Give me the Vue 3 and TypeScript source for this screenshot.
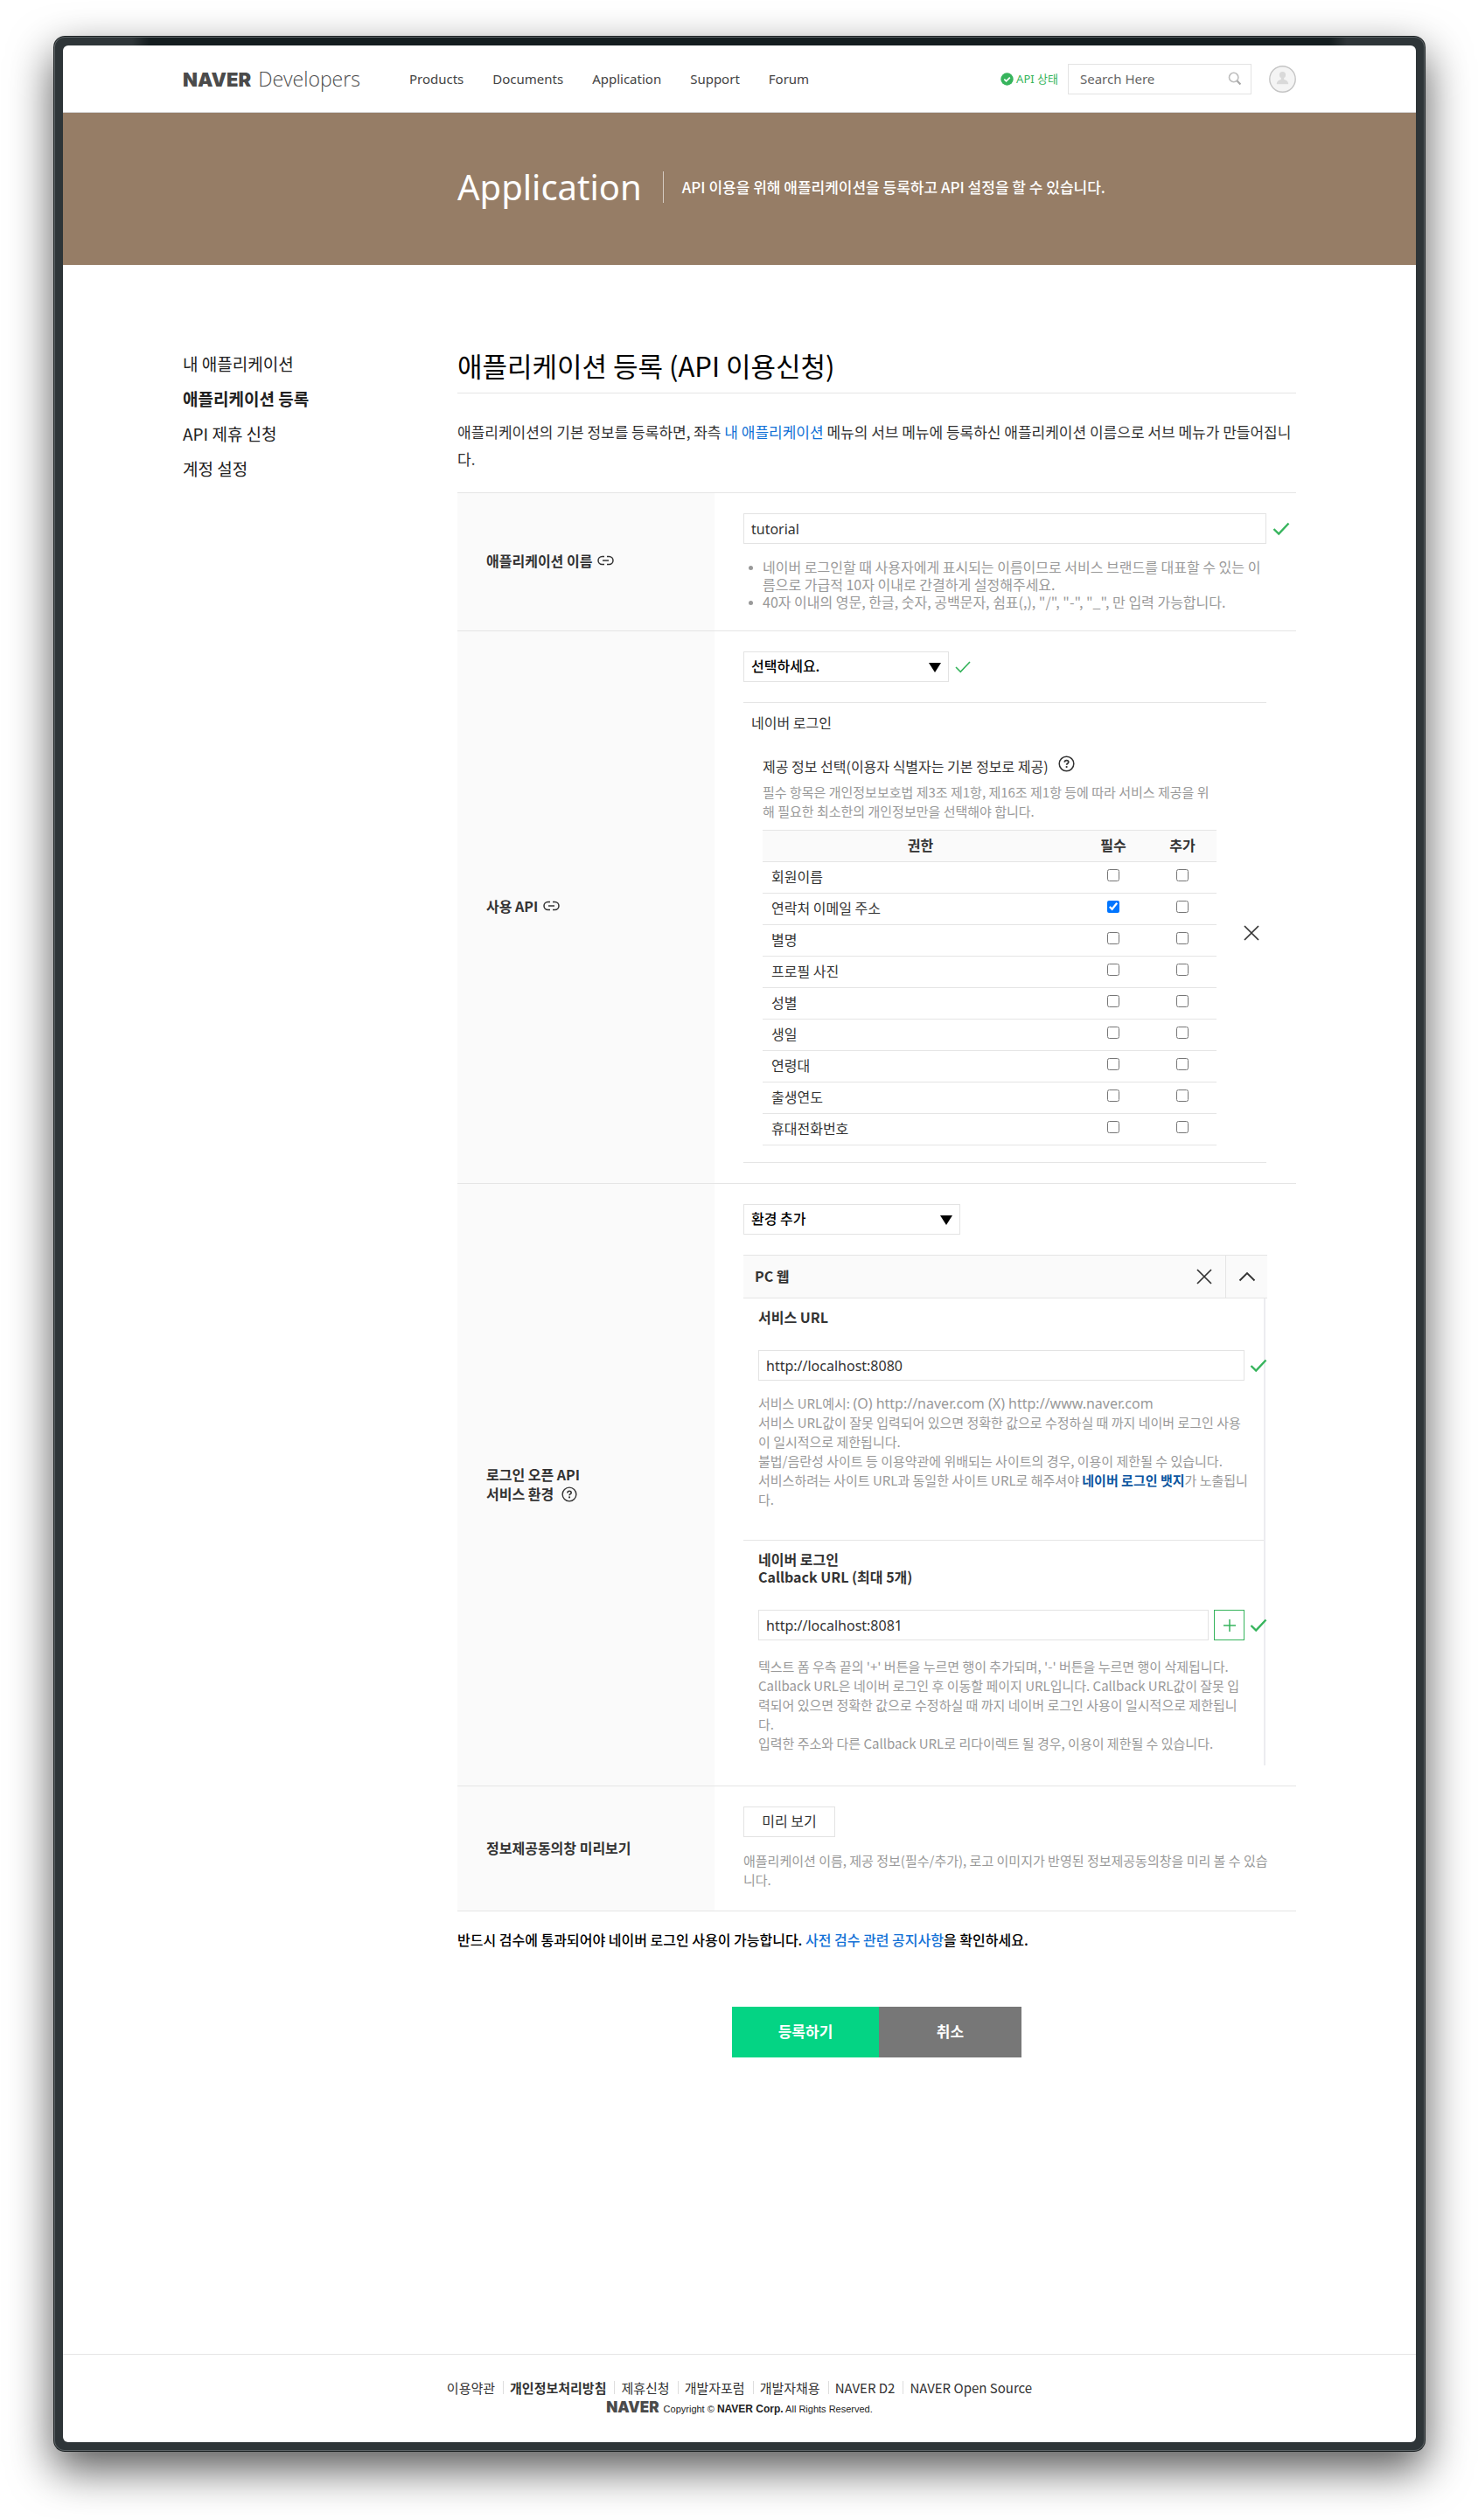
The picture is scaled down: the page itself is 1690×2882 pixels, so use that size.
<script setup lang="ts">
import { ref } from 'vue'

interface NavLink {
  label: string
  strong?: boolean
}

interface Permission {
  id: string
  label: string
  required: boolean
  optional: boolean
}

const navLinks: NavLink[] = [
  { label: 'Products' },
  { label: 'Documents' },
  { label: 'Application' },
  { label: 'Support' },
  { label: 'Forum' },
]

const sideLinks: NavLink[] = [
  { label: '내 애플리케이션' },
  { label: '애플리케이션 등록', strong: true },
  { label: 'API 제휴 신청' },
  { label: '계정 설정' },
]

const footerLinks: NavLink[] = [
  { label: '이용약관' },
  { label: '개인정보처리방침', strong: true },
  { label: '제휴신청' },
  { label: '개발자포럼' },
  { label: '개발자채용' },
  { label: 'NAVER D2' },
  { label: 'NAVER Open Source' },
]

const permissions = ref<Permission[]>([
  { id: 'name', label: '회원이름', required: false, optional: false },
  { id: 'email', label: '연락처 이메일 주소', required: true, optional: false },
  { id: 'nickname', label: '별명', required: false, optional: false },
  { id: 'photo', label: '프로필 사진', required: false, optional: false },
  { id: 'gender', label: '성별', required: false, optional: false },
  { id: 'birthday', label: '생일', required: false, optional: false },
  { id: 'age', label: '연령대', required: false, optional: false },
  { id: 'birthyear', label: '출생연도', required: false, optional: false },
  { id: 'mobile', label: '휴대전화번호', required: false, optional: false },
])

const appName = ref('tutorial')
const serviceUrl = ref('http://localhost:8080')
const callbackUrl = ref('http://localhost:8081')
</script>

<template>
  <div class="desk">
    <div class="bezel">
      <div class="screen">
        <header class="topbar">
          <div class="wrap topbar-inner">
            <a class="logo" href="#"><span class="logo-naver">NAVER</span><span class="logo-dev">Developers</span></a>
            <nav class="nav">
              <a v-for="link in navLinks" :key="link.label" href="#">{{ link.label }}</a>
            </nav>
            <a class="status" href="#">
              <svg width="15" height="15" viewBox="0 0 15 15" aria-hidden="true">
                <circle cx="7.5" cy="7.5" r="7.2" fill="#36b45c" />
                <path d="M4.3 7.6l2.3 2.3 4.2-4.3" fill="none" stroke="#fff" stroke-width="1.7" />
              </svg>
              API 상태
            </a>
            <form class="search" @submit.prevent>
              <input type="text" placeholder="Search Here" aria-label="Search Here" />
              <button type="submit" aria-label="검색">
                <svg width="16" height="16" viewBox="0 0 16 16" aria-hidden="true">
                  <circle cx="6.7" cy="6.5" r="5.2" fill="none" stroke="#bdbdbd" stroke-width="1.6" />
                  <path d="M10.6 10.4l3.8 4" stroke="#a8a8a8" stroke-width="2.2" />
                </svg>
              </button>
            </form>
            <a class="avatar" href="#" aria-label="내 정보">
              <svg width="31" height="31" viewBox="0 0 31 31" aria-hidden="true">
                <circle cx="15.5" cy="15.5" r="14.7" fill="#f4f4f4" stroke="#c4c4c4" stroke-width="1.4" />
                <circle cx="15.5" cy="10.7" r="3.6" fill="#d9d9d9" />
                <path d="M8.8 21.2c0-3.6 2.6-4.8 5-5.3v-2h3.4v2c2.4.5 5 1.7 5 5.3z" fill="#d9d9d9" />
              </svg>
            </a>
          </div>
        </header>

        <div class="banner">
          <div class="wrap banner-inner">
            <span class="banner-title">Application</span>
            <span class="banner-text">API 이용을 위해 애플리케이션을 등록하고 API 설정을 할 수 있습니다.</span>
          </div>
        </div>

        <div class="wrap body">
          <aside class="side">
            <a v-for="link in sideLinks" :key="link.label" href="#" :class="{ strong: link.strong }">{{ link.label }}</a>
          </aside>

          <main class="main">
            <h1>애플리케이션 등록 (API 이용신청)</h1>
            <p class="intro">
              애플리케이션의 기본 정보를 등록하면, 좌측 <a href="#">내 애플리케이션</a> 메뉴의 서브 메뉴에 등록하신 애플리케이션 이름으로 서브 메뉴가 만들어집니다.
            </p>

            <div class="form">
              <section class="row">
                <div class="row-head">
                  <label for="app-name">애플리케이션 이름</label>
                  <svg class="link-icon" width="19" height="12" viewBox="0 0 19 12" aria-hidden="true">
                    <path d="M8 1.5H5.5a4.5 4.5 0 0 0 0 9H8M11 1.5h2.5a4.5 4.5 0 0 1 0 9H11M6 6h7" fill="none" stroke="#333" stroke-width="1.5" />
                  </svg>
                </div>
                <div class="row-field">
                  <div class="line">
                    <input id="app-name" v-model="appName" class="box" type="text" />
                    <svg class="check" width="20" height="16" viewBox="0 0 20 16" aria-hidden="true">
                      <path d="M1.5 8l5.7 5.5L18.5 1.5" fill="none" stroke="#36b45c" stroke-width="2.4" />
                    </svg>
                  </div>
                  <ul class="hints">
                    <li>네이버 로그인할 때 사용자에게 표시되는 이름이므로 서비스 브랜드를 대표할 수 있는 이<br />름으로 가급적 10자 이내로 간결하게 설정해주세요.</li>
                    <li>40자 이내의 영문, 한글, 숫자, 공백문자, 쉼표(,), "/", "-", "_", 만 입력 가능합니다.</li>
                  </ul>
                </div>
              </section>

              <section class="row">
                <div class="row-head">
                  <label for="api-select">사용 API</label>
                  <svg class="link-icon" width="19" height="12" viewBox="0 0 19 12" aria-hidden="true">
                    <path d="M8 1.5H5.5a4.5 4.5 0 0 0 0 9H8M11 1.5h2.5a4.5 4.5 0 0 1 0 9H11M6 6h7" fill="none" stroke="#333" stroke-width="1.5" />
                  </svg>
                </div>
                <div class="row-field">
                  <div class="line">
                    <span class="select select-api">
                      <select id="api-select"><option>선택하세요.</option></select>
                      <svg width="14" height="11" viewBox="0 0 14 11" aria-hidden="true"><path d="M0 0h14L7 11z" /></svg>
                    </span>
                    <svg class="check" width="18" height="14" viewBox="0 0 18 14" aria-hidden="true">
                      <path d="M1 7l5.3 5.3L17 1" fill="none" stroke="#36b45c" stroke-width="1.6" />
                    </svg>
                  </div>
                  <div class="api">
                    <div class="api-body">
                      <p class="api-name">네이버 로그인</p>
                      <div class="scope">
                        <p class="scope-title">
                          제공 정보 선택(이용자 식별자는 기본 정보로 제공)
                          <svg width="19" height="19" viewBox="0 0 19 19" aria-hidden="true">
                            <circle cx="9.5" cy="9.5" r="8.3" fill="none" stroke="#333" stroke-width="1.5" />
                            <path d="M7.3 7.8c0-3.1 4.5-2.9 4.5-.2 0 1.6-2.2 1.6-2.2 3.2" fill="none" stroke="#333" stroke-width="1.7" />
                            <circle cx="9.6" cy="13.1" r="1.1" fill="#333" />
                          </svg>
                        </p>
                        <p class="note">필수 항목은 개인정보보호법 제3조 제1항, 제16조 제1항 등에 따라 서비스 제공을 위<br />해 필요한 최소한의 개인정보만을 선택해야 합니다.</p>
                        <table>
                          <thead>
                            <tr><th scope="col">권한</th><th scope="col" class="col-req">필수</th><th scope="col" class="col-opt">추가</th></tr>
                          </thead>
                          <tbody>
                            <tr v-for="p in permissions" :key="p.id">
                              <td>{{ p.label }}</td>
                              <td class="tick"><input v-model="p.required" type="checkbox" :aria-label="p.label + ' 필수'" /></td>
                              <td class="tick"><input v-model="p.optional" type="checkbox" :aria-label="p.label + ' 추가'" /></td>
                            </tr>
                          </tbody>
                        </table>
                      </div>
                    </div>
                    <button class="icon-btn remove" type="button" aria-label="네이버 로그인 삭제">
                      <svg width="18" height="18" viewBox="0 0 18 18"><path d="M1 1l16 16M17 1L1 17" stroke="#333" stroke-width="1.7" /></svg>
                    </button>
                  </div>
                </div>
              </section>

              <section class="row">
                <div class="row-head">
                  <label for="env-select">
                    로그인 오픈 API<br />서비스 환경
                    <svg class="help-inline" width="18" height="18" viewBox="0 0 19 19" aria-hidden="true">
                      <circle cx="9.5" cy="9.5" r="8.3" fill="none" stroke="#333" stroke-width="1.5" />
                      <path d="M7.3 7.8c0-3.1 4.5-2.9 4.5-.2 0 1.6-2.2 1.6-2.2 3.2" fill="none" stroke="#333" stroke-width="1.7" />
                      <circle cx="9.6" cy="13.1" r="1.1" fill="#333" />
                    </svg>
                  </label>
                </div>
                <div class="row-field">
                  <div class="line">
                    <span class="select select-env">
                      <select id="env-select"><option>환경 추가</option></select>
                      <svg width="14" height="11" viewBox="0 0 14 11" aria-hidden="true"><path d="M0 0h14L7 11z" /></svg>
                    </span>
                  </div>
                  <div class="panel">
                    <div class="panel-head">
                      <strong>PC 웹</strong>
                      <button class="icon-btn" type="button" aria-label="PC 웹 삭제">
                        <svg width="18" height="18" viewBox="0 0 18 18"><path d="M1 1l16 16M17 1L1 17" stroke="#333" stroke-width="1.7" /></svg>
                      </button>
                      <button class="icon-btn fold" type="button" aria-label="접기">
                        <svg width="20" height="12" viewBox="0 0 20 12"><path d="M1.5 10.5L10 2l8.5 8.5" fill="none" stroke="#333" stroke-width="1.9" /></svg>
                      </button>
                    </div>
                    <div class="panel-body">
                      <div class="panel-part">
                        <label for="service-url">서비스 URL</label>
                        <div class="line">
                          <input id="service-url" v-model="serviceUrl" class="box" type="text" />
                          <svg class="check" width="20" height="16" viewBox="0 0 20 16" aria-hidden="true">
                            <path d="M1.5 8l5.7 5.5L18.5 1.5" fill="none" stroke="#36b45c" stroke-width="2.4" />
                          </svg>
                        </div>
                        <p class="note">
                          서비스 URL예시: <span class="latin">(O) http://naver.com (X) http://www.naver.com</span><br />
                          서비스 URL값이 잘못 입력되어 있으면 정확한 값으로 수정하실 때 까지 네이버 로그인 사용<br />
                          이 일시적으로 제한됩니다.<br />
                          불법/음란성 사이트 등 이용약관에 위배되는 사이트의 경우, 이용이 제한될 수 있습니다.<br />
                          서비스하려는 사이트 URL과 동일한 사이트 URL로 해주셔야 <a href="#">네이버 로그인 뱃지</a>가 노출됩니<br />
                          다.
                        </p>
                      </div>
                      <div class="panel-part callback">
                        <label for="callback-url">네이버 로그인<br />Callback URL (최대 5개)</label>
                        <div class="line">
                          <input id="callback-url" v-model="callbackUrl" class="box" type="text" />
                          <button class="plus" type="button" aria-label="Callback URL 추가">
                            <svg width="14" height="14" viewBox="0 0 14 14"><path d="M7 0v14M0 7h14" stroke="#36b45c" stroke-width="1.5" /></svg>
                          </button>
                          <svg class="check" width="20" height="16" viewBox="0 0 20 16" aria-hidden="true">
                            <path d="M1.5 8l5.7 5.5L18.5 1.5" fill="none" stroke="#36b45c" stroke-width="2.4" />
                          </svg>
                        </div>
                        <p class="note">
                          텍스트 폼 우측 끝의 '+' 버튼을 누르면 행이 추가되며, '-' 버튼을 누르면 행이 삭제됩니다.<br />
                          Callback URL은 네이버 로그인 후 이동할 페이지 URL입니다. Callback URL값이 잘못 입<br />
                          력되어 있으면 정확한 값으로 수정하실 때 까지 네이버 로그인 사용이 일시적으로 제한됩니<br />
                          다.<br />
                          입력한 주소와 다른 Callback URL로 리다이렉트 될 경우, 이용이 제한될 수 있습니다.
                        </p>
                      </div>
                    </div>
                  </div>
                </div>
              </section>

              <section class="row">
                <div class="row-head"><span>정보제공동의창 미리보기</span></div>
                <div class="row-field">
                  <button class="preview" type="button">미리 보기</button>
                  <p class="note preview-note">애플리케이션 이름, 제공 정보(필수/추가), 로고 이미지가 반영된 정보제공동의창을 미리 볼 수 있습<br />니다.</p>
                </div>
              </section>
            </div>

            <p class="notice">반드시 검수에 통과되어야 네이버 로그인 사용이 가능합니다. <a href="#">사전 검수 관련 공지사항</a>을 확인하세요.</p>

            <div class="actions">
              <button class="submit" type="submit">등록하기</button>
              <button class="cancel" type="button">취소</button>
            </div>
          </main>
        </div>

        <footer class="foot">
          <nav class="foot-links">
            <a v-for="link in footerLinks" :key="link.label" href="#" :class="{ strong: link.strong }">{{ link.label }}</a>
          </nav>
          <p class="copyright"><span class="foot-logo">NAVER</span><span>Copyright © <b>NAVER Corp.</b> All Rights Reserved.</span></p>
        </footer>
      </div>
    </div>
  </div>
</template>

<style>
body {
  background: #fff;
}
</style>

<style scoped>
* {
  box-sizing: border-box;
}

p,
h1,
ul {
  margin: 0;
  padding: 0;
}

a {
  color: inherit;
  text-decoration: none;
}

button,
input,
select {
  margin: 0;
  padding: 0;
  border-radius: 0;
  color: inherit;
  font: inherit;
}

button {
  background: none;
  border: 0;
}

svg {
  display: block;
  flex: none;
}

.desk {
  padding: 41px 60px 79px 61px;
  color: #333;
  font-family: 'Noto Sans CJK KR', 'Noto Sans', sans-serif;
  font-size: 16px;
  line-height: 22px;
}

.bezel {
  padding: 11px;
  border-radius: 13px;
  background: linear-gradient(90deg, #2e3538 90px, #141d1f 110px, #141d1f calc(100% - 110px), #2e3538 calc(100% - 90px)) top / 100% 40px no-repeat, #2e3538;
  box-shadow: inset 0 0 0 1px #1b2022, inset 0 0 0 2px #5b6265, 0 20px 50px rgba(0, 0, 0, 0.66);
}

.screen {
  overflow: hidden;
  border-radius: 6px;
  background: #fff;
}

.wrap {
  width: 100%;
  max-width: 1273px;
  margin: 0 auto;
}

.topbar {
  border-bottom: 1px solid #d8d8d8;
}

.topbar-inner {
  display: flex;
  align-items: center;
  height: 76px;
  font-family: 'Noto Sans', 'Noto Sans CJK KR', sans-serif;
}

.logo {
  display: flex;
  align-items: baseline;
  gap: 8px;
  color: #4b4b4b;
}

.logo-naver,
.foot-logo {
  font-family: Inter, sans-serif;
  font-size: 22px;
  font-weight: 900;
}

.logo-dev {
  font-family: 'Open Sans', sans-serif;
  font-size: 23px;
  font-weight: 300;
}

.nav {
  display: flex;
  flex: 1;
  gap: 33px;
  margin-left: 56px;
  color: #444;
  font-size: 15px;
}

.status {
  display: flex;
  align-items: center;
  gap: 3px;
  color: #36b45c;
  font-size: 13px;
}

.search {
  display: flex;
  align-items: center;
  width: 210px;
  height: 35px;
  margin: 0 20px 0 11px;
  padding: 0 10px 0 13px;
  border: 1px solid #e3e3e3;
}

.search input {
  flex: 1;
  min-width: 0;
  border: 0;
  outline: 0;
  background: none;
  font-size: 15px;
}

.search input::placeholder {
  color: #666;
  opacity: 1;
}

.banner {
  background: #967d66;
  color: #fff;
}

.banner-inner {
  display: flex;
  align-items: center;
  height: 174px;
  padding: 0 0 4px 314px;
}

.banner-title {
  padding-right: 24px;
  font-family: 'Noto Sans', sans-serif;
  font-size: 40px;
  line-height: 60px;
}

.banner-text {
  padding-left: 21px;
  border-left: 1px solid #d5cbc2;
  font-size: 17px;
  font-weight: 500;
  line-height: 36px;
}

.body {
  display: flex;
  padding: 93px 0 339px;
}

.side {
  flex: 0 0 314px;
  display: flex;
  flex-direction: column;
  color: #222;
  font-size: 19px;
  line-height: 40px;
}

.strong {
  font-weight: 700;
}

.main {
  flex: 1;
  min-width: 0;
  padding-top: 2px;
}

h1 {
  padding-bottom: 11px;
  border-bottom: 1px solid #e5e5e5;
  color: #000;
  font-size: 31px;
  font-weight: 400;
  line-height: 40px;
}

.intro {
  padding: 28px 0 23px;
  font-size: 17px;
  line-height: 31px;
  word-break: break-all;
}

.intro a,
.notice a {
  color: #1271d6;
}

.form {
  border-bottom: 1px solid #e5e5e5;
}

.row {
  display: flex;
  border-top: 1px solid #e5e5e5;
}

.row-head {
  flex: 0 0 294px;
  display: flex;
  align-items: center;
  gap: 6px;
  padding: 0 0 3px 33px;
  background: #fafafa;
  font-weight: 700;
}

.help-inline {
  display: inline-block;
  margin-left: 5px;
  vertical-align: -3px;
}

.row-field {
  flex: 1;
  min-width: 0;
  padding: 23px 0 23px 33px;
}

.line {
  display: flex;
  align-items: center;
  gap: 7px;
  padding-right: 7px;
}

.box {
  flex: 1;
  min-width: 0;
  height: 35px;
  padding: 0 8px;
  border: 1px solid #e3e3e3;
  outline: 0;
  background: #fff;
  font-family: 'Noto Sans', 'Noto Sans CJK KR', sans-serif;
}

.hints {
  margin-top: 16px;
  padding-left: 22px;
  color: #999;
  line-height: 20px;
  list-style: none;
  white-space: nowrap;
}

.hints li::before {
  content: '';
  display: inline-block;
  width: 5px;
  height: 5px;
  margin: 0 11px 0 -16px;
  border-radius: 50%;
  background: #999;
  vertical-align: 3px;
}

.select {
  position: relative;
  display: block;
}

.select-api {
  width: 235px;
}

.select-env {
  width: 248px;
}

.select select {
  display: block;
  width: 100%;
  height: 35px;
  padding: 0 8px 3px;
  border: 1px solid #e3e3e3;
  appearance: none;
  background: #fff;
  color: #000;
  font-weight: 500;
}

.select svg {
  position: absolute;
  top: 13px;
  right: 9px;
  pointer-events: none;
}

.api {
  display: flex;
  align-items: center;
  margin: 23px 34px 0 0;
  border: 1px solid #e5e5e5;
  border-width: 1px 0;
}

.api-body {
  flex: 1;
  padding: 11px 23px 19px 9px;
}

.scope {
  padding: 28px 0 0 13px;
}

.scope-title {
  display: flex;
  align-items: flex-start;
  gap: 11px;
}

.scope-title svg {
  margin-top: -1px;
}

.note {
  color: #999;
  font-size: 15px;
  white-space: nowrap;
}

.latin {
  font-family: 'Noto Sans', sans-serif;
  font-size: 16px;
}

.scope .note {
  margin: 8px 0 10px;
}

.icon-btn {
  display: flex;
  flex: 0 0 48px;
  align-items: center;
  justify-content: center;
  height: 48px;
}

.remove {
  flex-basis: 34px;
}

table {
  width: 100%;
  border-collapse: collapse;
}

th,
td {
  height: 36px;
  padding: 0 10px 4px;
  border: 1px solid #e5e5e5;
  border-width: 1px 0;
  text-align: left;
}

th {
  background: #fafafa;
  font-weight: 700;
  text-align: center;
}

.col-req {
  width: 80px;
}

.col-opt {
  width: 78px;
}

.tick {
  text-align: center;
}

.tick input {
  display: block;
  width: 14px;
  height: 14px;
  margin: 0 auto 2px;
  accent-color: #0075ff;
}

.panel {
  margin: 23px 33px 0 0;
}

.panel-head {
  display: flex;
  align-items: center;
  padding-left: 13px;
  border: 1px solid #e5e5e5;
  border-width: 1px 0;
  background: #fafafa;
}

.panel-head strong {
  flex: 1;
  padding-bottom: 3px;
}

.panel-head .fold {
  border-left: 1px solid #e5e5e5;
}

.panel-body {
  margin-right: 2px;
  border-right: 2px solid #ececf0;
}

.panel-part {
  padding: 11px 0 35px 17px;
}

.panel-part + .panel-part {
  padding-bottom: 14px;
  border-top: 1px solid #e5e5e5;
}

.panel-part label {
  display: block;
  margin-bottom: 28px;
  font-weight: 700;
  line-height: 20px;
}

.panel-part .line {
  gap: 6px;
  margin-right: -4px;
  padding: 0;
}

.panel-part .note {
  margin-top: 15px;
}

.callback .note {
  margin-top: 19px;
}

.note a {
  color: #0b55a0;
  font-weight: 700;
}

.plus {
  display: flex;
  align-items: center;
  justify-content: center;
  width: 35px;
  height: 35px;
  border: 1px solid #36b45c;
}

.preview {
  display: block;
  width: 105px;
  height: 35px;
  padding-bottom: 3px;
  border: 1px solid #e3e3e3;
}

.row-field .preview-note {
  margin: 16px 0 1px;
}

.notice {
  margin-top: 21px;
  color: #000;
  font-weight: 500;
}

.actions {
  display: flex;
  justify-content: center;
  margin-top: 66px;
  color: #fff;
  font-size: 17px;
  font-weight: 700;
}

.actions button {
  height: 58px;
  padding-bottom: 3px;
}

.submit {
  width: 168px;
  background: #04d484;
}

.cancel {
  width: 163px;
  background: #777;
}

.foot {
  padding: 28px 0;
  border-top: 1px solid #e5e5e5;
}

.foot-links {
  display: flex;
  justify-content: center;
  padding: 2px 0 3px;
  font-size: 15px;
  line-height: 15px;
}

.foot-links a + a {
  margin-left: 9px;
  padding-left: 7px;
  border-left: 1px solid #ddd;
}

.copyright {
  display: flex;
  justify-content: center;
  align-items: baseline;
  gap: 5px;
  margin-top: 2px;
  color: #222;
  font-family: 'Liberation Sans', Arial, sans-serif;
  font-size: 11px;
  line-height: 20px;
}

.copyright b {
  font-size: 12px;
}

.foot-logo {
  color: #4b4b4b;
  font-size: 17px;
}
</style>
